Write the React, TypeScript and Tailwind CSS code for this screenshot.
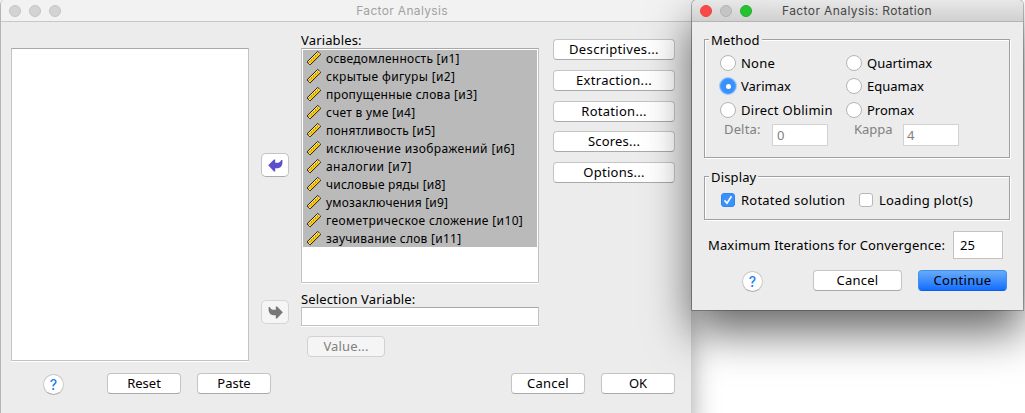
import type { ReactNode } from 'react';
import clsx from 'clsx';

const variables = [
  { label: 'осведомленность [и1]', fit: 'tracking-[0.25px]' },
  { label: 'скрытые фигуры [и2]', fit: 'tracking-[0.36px]' },
  { label: 'пропущенные слова [и3]', fit: 'tracking-[0.3px]' },
  { label: 'счет в уме [и4]', fit: 'tracking-[0.27px]' },
  { label: 'понятливость [и5]', fit: 'tracking-[0.22px]' },
  { label: 'исключение изображений [и6]', fit: 'tracking-[0.38px]' },
  { label: 'аналогии [и7]', fit: 'tracking-[0.42px]' },
  { label: 'числовые ряды [и8]', fit: 'tracking-[0.2px]' },
  { label: 'умозаключения [и9]', fit: 'tracking-[0.2px]' },
  { label: 'геометрическое сложение [и10]', fit: 'tracking-[0.37px]' },
  { label: 'заучивание слов [и11]', fit: 'tracking-[0.25px]' },
];

function Ruler() {
  return (
    <svg width="16" height="16" viewBox="0 0 16 16" className="mb-[1px] shrink-0">
      <path d="M1 11.9 11.7 1.4 14.8 4.4 4.1 14.9Z" fill="#fec800" stroke="#24231a" strokeWidth="1" />
      <path d="M2.2 12 12 2.4" stroke="#fff8c8" strokeWidth="0.9" />
      <path d="M2.8 12.6 12.4 3.2" stroke="#24231a" strokeWidth="1" strokeDasharray="0.9 2" />
      <path d="M12.4 3.2 13.4 4.2M3.2 13l.8.8" stroke="#f4f4e0" strokeWidth="1.1" />
    </svg>
  );
}

function Button({ children, className, disabled }: { children: ReactNode; className?: string; disabled?: boolean }) {
  return (
    <button
      className={clsx(
        'flex h-[21px] shrink-0 items-center justify-center rounded-[4px] border pb-px whitespace-nowrap',
        disabled
          ? 'border-[#d2d2d2] bg-[#f5f5f5] text-[#808080]'
          : 'border-[#c4c4c4] border-b-[#a9a9a9] bg-white text-black',
        className,
      )}
    >
      {children}
    </button>
  );
}

function Help({ className }: { className?: string }) {
  return (
    <button
      className={clsx(
        'flex size-[21px] shrink-0 items-center justify-center rounded-full border border-[#c8c8c8] border-b-[#ababab] bg-white font-[Inter,sans-serif] text-[14px] font-medium text-[#1a80ff]',
        className,
      )}
    >
      ?
    </button>
  );
}

function Arrow({ flip, disabled, className }: { flip?: boolean; disabled?: boolean; className?: string }) {
  return (
    <button
      className={clsx(
        'flex h-[24px] w-[28px] items-center justify-center rounded-[5px] border',
        disabled ? 'border-[#d4d4d4] bg-[#f5f5f5]' : 'border-[#c4c4c4] border-b-[#ababab] bg-white',
        className,
      )}
    >
      <svg width="15" height="13" viewBox="0 0 15 13" className={flip ? '-scale-x-100' : undefined}>
        <path
          d="M0.2 6.3 6 .4H7.2V3.8H10C11.4 3.8 12.3 2.8 13.2 1H14.4V4.6C13.8 7.6 12.2 9.2 9.8 9.2H7.2V12.4H6Z"
          fill={disabled ? '#777' : '#5a50ca'}
        />
      </svg>
    </button>
  );
}

function Radio({ label, checked, fit }: { label: string; checked?: boolean; fit?: string }) {
  return (
    <label className="flex h-[23.5px] items-center gap-[5px]">
      <span
        className={clsx(
          'flex size-[16px] shrink-0 items-center justify-center rounded-full border',
          checked ? 'border-[#4f9dfa] bg-[#3b91fb] ring-1 ring-[#9cc8fa]' : 'border-[#b4b4b4] bg-white',
        )}
      >
        {checked && <span className="size-[5px] rounded-full bg-white" />}
      </span>
      <span className={clsx('whitespace-nowrap', fit)}>{label}</span>
    </label>
  );
}

function Checkbox({ label, checked }: { label: string; checked?: boolean }) {
  return (
    <label className="flex items-center gap-[6px]">
      <span
        className={clsx(
          'flex size-[14px] shrink-0 items-center justify-center rounded-[3px] border',
          checked ? 'border-[#2f86f3] bg-[#3b91fb]' : 'border-[#b8b8b8] bg-white',
        )}
      >
        {checked && (
          <svg width="10" height="10" viewBox="0 0 10 10" fill="none" stroke="#fff" strokeWidth="1.6">
            <path d="M1.5 5.4 4 8.2 8.5 1.2" />
          </svg>
        )}
      </span>
      <span className="tracking-[0.22px] whitespace-nowrap">{label}</span>
    </label>
  );
}

function Group({ title, className, children }: { title: string; className: string; children: ReactNode }) {
  return (
    <section className={clsx('border border-[#a0a0a0] shadow-[1px_1px_0_#fff,inset_1px_1px_0_#fff]', className)}>
      <h2 className="mt-[-9px] ml-[4px] h-[18px] w-fit bg-[#ececec] px-[2px] leading-[18px] tracking-[0.15px]">{title}</h2>
      {children}
    </section>
  );
}

const inset = 'border border-[#c3c3c3] border-t-[#a8a8a8] bg-white shadow-[0_1px_0_#fff]';

function MainWindow() {
  return (
    <section className="h-[430px] w-[691px] shrink-0 overflow-hidden rounded-tl-[5px] border-l border-[#b4b4b4] bg-[#ececec] shadow-[0_8px_28px_rgba(0,0,0,0.38)]">
      <header className="flex h-[22px] items-center border-b border-[#c8c8c8] bg-[#f2f2f2]">
        <div className="flex w-[60px] gap-[8px] pl-[8px]">
          {[0, 1, 2].map((i) => (
            <span key={i} className="size-[12px] rounded-full border border-[#c4c4c4] bg-[#d3d3d3]" />
          ))}
        </div>
        <h1 className="grow pl-[52px] text-center font-[Inter,sans-serif] text-[12px] tracking-[0.33px] text-[#a2a2a2]">
          Factor Analysis
        </h1>
      </header>
      <div className="flex h-[339px]">
        <div className={clsx('mt-[26px] ml-[10px] h-[313px] w-[238px]', inset)} />
        <div className="ml-[12px] w-[28px]">
          <Arrow className="mt-[131px]" />
          <Arrow flip disabled className="mt-[123px]" />
        </div>
        <div className="ml-[12px] w-[238px] pt-[9px]">
          <div className="h-[17px] leading-[19px] tracking-[0.15px]">Variables:</div>
          <div className={clsx('h-[235px] px-px pt-px', inset)}>
            <ul className="flex h-[197px] flex-col bg-[#bababa] text-[12px]">
              {variables.map((v) => (
                <li key={v.label} className="flex flex-1 items-center gap-[4px] pl-[3px] leading-[17px]">
                  <Ruler />
                  <span className={clsx('whitespace-nowrap', v.fit)}>{v.label}</span>
                </li>
              ))}
            </ul>
          </div>
          <div className="mt-[7px] h-[17px] leading-[18px] tracking-[0.14px]">Selection Variable:</div>
          <div className={clsx('h-[19px]', inset)} />
          <Button disabled className="mt-[10px] ml-[6px] w-[78px] tracking-[0.15px]">
            Value...
          </Button>
        </div>
        <nav className="ml-[14px] flex w-[122px] flex-col gap-[9.75px] pt-[17px]">
          <Button className="tracking-[0.35px]">Descriptives...</Button>
          <Button className="tracking-[0.32px]">Extraction...</Button>
          <Button className="tracking-[0.28px]">Rotation...</Button>
          <Button className="tracking-[0.2px]">Scores...</Button>
          <Button className="tracking-[0.28px]">Options...</Button>
        </nav>
      </div>
      <footer className="flex items-start pt-[12px] pl-[42px]">
        <Help className="mt-[1px]" />
        <Button className="ml-[43px] w-[74px]">Reset</Button>
        <Button className="ml-[16px] w-[74px]">Paste</Button>
        <Button className="ml-[240px] w-[74px] tracking-[0.25px]">Cancel</Button>
        <Button className="ml-[16px] w-[74px]">OK</Button>
      </footer>
    </section>
  );
}

function RotationDialog() {
  return (
    <section className="relative ml-px h-[310px] w-[331px] shrink-0 rounded-t-[5px] bg-[#ececec] shadow-[0_0_0_1px_rgba(0,0,0,0.25),0_22px_45px_rgba(0,0,0,0.6)]">
      <header className="flex h-[22px] items-center rounded-t-[5px] border-b border-[#b4b4b4] bg-linear-to-b from-[#e8e8e8] to-[#d0d0d0]">
        <div className="flex w-[60px] shrink-0 gap-[8px] pl-[8px]">
          <span className="size-[12px] rounded-full border border-[#e9443f] bg-[#fc4848]" />
          <span className="size-[12px] rounded-full border border-[#b3b3b3] bg-[#c4c4c4]" />
          <span className="size-[12px] rounded-full border border-[#1fae2b] bg-[#27c232]" />
        </div>
        <h1 className="pl-[30px] font-[Inter,sans-serif] text-[12px] tracking-[0.4px] whitespace-nowrap text-[#464646]">
          Factor Analysis: Rotation
        </h1>
      </header>
      <div className="flex flex-col pt-[17px] pl-[12px]">
        <Group title="Method" className="h-[119px] w-[306px]">
          <div className="mt-[2px] grid grid-cols-[126px_1fr] pl-[15px]">
            <Radio label="None" fit="tracking-[0.2px]" />
            <Radio label="Quartimax" />
            <Radio label="Varimax" checked />
            <Radio label="Equamax" />
            <Radio label="Direct Oblimin" fit="tracking-[0.27px]" />
            <Radio label="Promax" />
          </div>
          <div className="flex pl-[19px] text-[#808080]">
            <span className="w-[48px] leading-[14px] tracking-[0.15px]">Delta:</span>
            <span className="mt-[2px] h-[22px] w-[56px] border border-[#d2d2d2] bg-white pl-[4px] leading-[20px]">0</span>
            <span className="ml-[26px] w-[49px] leading-[14px]">Kappa</span>
            <span className="mt-[2px] h-[22px] w-[56px] border border-[#d2d2d2] bg-white pl-[3px] leading-[20px]">4</span>
          </div>
        </Group>
        <Group title="Display" className="mt-[18px] h-[44px] w-[306px]">
          <div className="mt-[5px] flex pl-[16px]">
            <div className="w-[138px]">
              <Checkbox label="Rotated solution" checked />
            </div>
            <Checkbox label="Loading plot(s)" />
          </div>
        </Group>
        <div className="mt-[11px] flex h-[28px] items-center pl-[4px]">
          <span className="w-[245px] tracking-[0.14px] whitespace-nowrap">Maximum Iterations for Convergence:</span>
          <span className="h-[28px] w-[50px] border border-[#c3c3c3] bg-white pl-[6px] leading-[26px]">25</span>
        </div>
        <div className="mt-[11px] flex pl-[38px]">
          <Help className="mt-[1px]" />
          <Button className="ml-[50px] w-[89px] tracking-[0.25px]">Cancel</Button>
          <button className="ml-[16px] flex h-[21px] w-[89px] items-center justify-center rounded-[4px] border border-[#3f8ff0] border-b-[#0d5fe0] bg-linear-to-b from-[#66abf8] to-[#116cff] pb-px tracking-[0.3px] text-black">
            Continue
          </button>
        </div>
      </div>
    </section>
  );
}

export default function App() {
  return (
    <main className="flex h-[413px] w-[1025px] items-start overflow-hidden bg-white font-['Noto_Sans',sans-serif] text-[13px] leading-[18px] text-black">
      <MainWindow />
      <RotationDialog />
    </main>
  );
}
